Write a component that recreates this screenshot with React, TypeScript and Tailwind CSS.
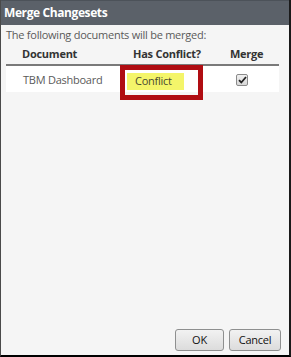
export default function App() {
  return (
    <div
      className="w-[291px] h-[357px] flex flex-col bg-[#f5f5f5] border-l border-l-[#4a4a4a] border-r-2 border-r-[#1a1a1a] border-b-2 border-b-black tracking-[-0.25px]"
      style={{ fontFamily: '"Open Sans", "Noto Sans", sans-serif' }}
    >
      {/* Title bar */}
      <div className="h-[25px] bg-[#5b6169] flex items-center pl-[3px] border-t border-t-[#4c5259]">
        <span className="text-white text-[12px] font-bold tracking-[-0.4px]">Merge Changesets</span>
      </div>

      {/* Body */}
      <div className="flex-1 flex flex-col pl-[5px] pr-[10px]">
        <p className="text-[11px] text-[#5a5a5a] mt-[3px] leading-[14px] whitespace-nowrap">The following documents will be merged:</p>

        <div className="grid grid-cols-[114px_83px_76px] mt-[5px] text-[11px] font-bold text-[#333] leading-[14px] pb-[3px] border-b-2 border-b-[#7a7a7a] whitespace-nowrap">
          <span className="pl-[16px]">Document</span>
          <span className="pl-[13px]">Has Conflict?</span>
          <span className="pl-[27px]">Merge</span>
        </div>

        <div className="grid grid-cols-[114px_83px_76px] h-[26px] bg-white items-center text-[11px] text-[#5a5a5a] whitespace-nowrap">
          <span className="pl-[17px] pt-[2px]">TBM Dashboard</span>
          <span className="relative h-full flex items-center">
            <span className="absolute left-0 top-[-1px] w-[83px] h-[35px] border-[5px] border-[#b00d12]" />
            <span className="ml-[7px] mt-[4px] w-[57px] h-[17px] bg-[#f4f56a] pl-[8px] flex items-center text-[#4a4a30]">Conflict</span>
          </span>
          <span className="pl-[33px] pt-[2px] flex items-center">
            <span className="w-[12px] h-[12px] rounded-[2px] border border-[#8a8a8a] bg-gradient-to-b from-[#f0f0f0] to-[#d8d8d8] flex items-center justify-center">
              <svg width="9" height="8" viewBox="0 0 9 8">
                <path d="M1 4.2 L3.3 6.5 L8 1" stroke="#222" strokeWidth="1.8" fill="none" />
              </svg>
            </span>
          </span>
        </div>

        <div className="flex-1" />

        <div className="flex justify-end gap-[5px] mb-[4px] mr-[-2px]">
          <button className="w-[49px] h-[22px] rounded-[3px] border border-[#8e8f8f] bg-gradient-to-b from-[#f2f2f2] to-[#dcdcdc] text-[11px] text-[#111]">OK</button>
          <button className="w-[52px] h-[22px] rounded-[3px] border border-[#8e8f8f] bg-gradient-to-b from-[#f2f2f2] to-[#dcdcdc] text-[11px] text-[#111]">Cancel</button>
        </div>
      </div>
    </div>
  );
}
